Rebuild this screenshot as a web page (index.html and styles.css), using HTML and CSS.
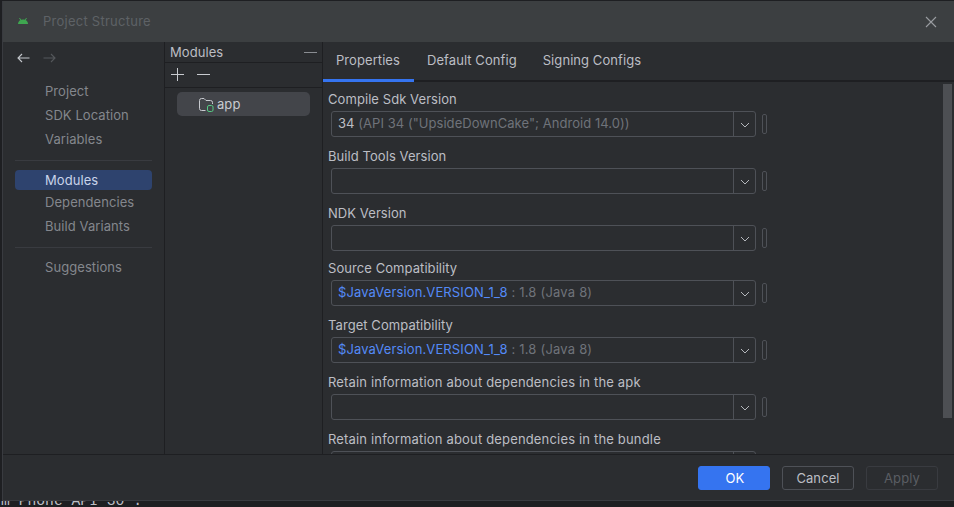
FILE: index.html
```html
<!DOCTYPE html>
<html>
    <head>
        <meta http-equiv="Content-Type" content="text/html; charset=utf-8"/>
        <title>Project Structure</title>
        <link rel="stylesheet" href="styles.css">
    </head>
    <body>
        <div class="dialog">
            <div class="titlebar">
                <svg class="logo" width="10" height="6" viewBox="0 0 10 6"><path d="M0 6C0 3.500 2 1.500 5 1.500S10 3.500 10 6z" fill="#3fa650"/><path d="M1.500 0L3 2.500M8.500 0L7 2.500" stroke="#3fa650" fill="none"/></svg>
                <span class="title">Project Structure</span>
                <svg class="close" width="12" height="12" viewBox="0 0 12 12"><path d="M1 1L11 11M11 1L1 11" stroke="#9a9da1" stroke-width="1.100" fill="none"/></svg>
            </div>
            <div class="main">
                <div class="nav">
                    <div class="arrows">
                        <svg width="13" height="10" viewBox="0 0 13 10"><path d="M12.500 5H1M5 1L1 5L5 9" stroke="#c4c7cc" stroke-width="1.100" fill="none"/></svg>
                        <svg width="13" height="10" viewBox="0 0 13 10"><path d="M.5 5H12M8 1L12 5L8 9" stroke="#55585c" stroke-width="1.100" fill="none"/></svg>
                    </div>
                    <div class="nav-group">
                        <div class="nav-item">Project</div>
                        <div class="nav-item">SDK Location</div>
                        <div class="nav-item">Variables</div>
                    </div>
                    <div class="nav-sep sep-a"></div>
                    <div class="nav-item selected">Modules</div>
                    <div class="nav-item">Dependencies</div>
                    <div class="nav-item">Build Variants</div>
                    <div class="nav-sep sep-b"></div>
                    <div class="nav-item">Suggestions</div>
                </div>
                <div class="modules">
                    <div class="modules-head">
                        <span>Modules</span>
                        <span class="minimize"></span>
                    </div>
                    <div class="modules-tools">
                        <svg width="14" height="14" viewBox="0 0 14 14"><path d="M6.500 1V14M0 7.500H13" stroke="#c8cbd0" stroke-width="1" fill="none"/></svg>
                        <svg width="14" height="14" viewBox="0 0 14 14"><path d="M0 7.500H13" stroke="#c8cbd0" stroke-width="1" fill="none"/></svg>
                    </div>
                    <div class="module-row">
                        <svg class="folder" width="15" height="14" viewBox="0 0 15 14"><path d="M6.500 12.500H2.500a2 2 0 0 1-2-2V2.500a2 2 0 0 1 2-2H5l2 2h4.500a2 2 0 0 1 2 2V6" stroke="#c8cbd0" fill="none"/><rect x="8.500" y="7.500" width="5.500" height="6" rx="1.500" stroke="#56c983" fill="none"/></svg>
                        <span>app</span>
                    </div>
                </div>
                <div class="content">
                    <div class="tabs">
                        <div class="tab active">Properties</div>
                        <div class="tab">Default Config</div>
                        <div class="tab">Signing Configs</div>
                    </div>
                    <div class="props">
                        <div class="form">
                            <div class="row">
                                <label>Compile Sdk Version</label>
                                <div class="line">
                                    <div class="combo"><div class="value"><span class="plain">34</span> (API 34 ("UpsideDownCake"; Android 14.0))</div><div class="drop"><svg width="10" height="6" viewBox="0 0 10 6"><path d="M1 1L5 5L9 1" stroke="#b4b7bc" fill="none"/></svg></div></div>
                                    <div class="pin"></div>
                                </div>
                            </div>
                            <div class="row">
                                <label>Build Tools Version</label>
                                <div class="line">
                                    <div class="combo"><div class="value"></div><div class="drop"><svg width="10" height="6" viewBox="0 0 10 6"><path d="M1 1L5 5L9 1" stroke="#b4b7bc" fill="none"/></svg></div></div>
                                    <div class="pin"></div>
                                </div>
                            </div>
                            <div class="row short">
                                <label>NDK Version</label>
                                <div class="line">
                                    <div class="combo"><div class="value"></div><div class="drop"><svg width="10" height="6" viewBox="0 0 10 6"><path d="M1 1L5 5L9 1" stroke="#b4b7bc" fill="none"/></svg></div></div>
                                    <div class="pin"></div>
                                </div>
                            </div>
                            <div class="row">
                                <label>Source Compatibility</label>
                                <div class="line">
                                    <div class="combo"><div class="value java"><span class="ref">$JavaVersion.VERSION_1_8</span> : 1.8 (Java 8)</div><div class="drop"><svg width="10" height="6" viewBox="0 0 10 6"><path d="M1 1L5 5L9 1" stroke="#b4b7bc" fill="none"/></svg></div></div>
                                    <div class="pin"></div>
                                </div>
                            </div>
                            <div class="row">
                                <label>Target Compatibility</label>
                                <div class="line">
                                    <div class="combo"><div class="value java"><span class="ref">$JavaVersion.VERSION_1_8</span> : 1.8 (Java 8)</div><div class="drop"><svg width="10" height="6" viewBox="0 0 10 6"><path d="M1 1L5 5L9 1" stroke="#b4b7bc" fill="none"/></svg></div></div>
                                    <div class="pin"></div>
                                </div>
                            </div>
                            <div class="row">
                                <label class="long">Retain information about dependencies in the apk</label>
                                <div class="line">
                                    <div class="combo"><div class="value"></div><div class="drop"><svg width="10" height="6" viewBox="0 0 10 6"><path d="M1 1L5 5L9 1" stroke="#b4b7bc" fill="none"/></svg></div></div>
                                    <div class="pin"></div>
                                </div>
                            </div>
                            <div class="row">
                                <label class="long">Retain information about dependencies in the bundle</label>
                                <div class="line">
                                    <div class="combo"><div class="value"></div><div class="drop"><svg width="10" height="6" viewBox="0 0 10 6"><path d="M1 1L5 5L9 1" stroke="#b4b7bc" fill="none"/></svg></div></div>
                                    <div class="pin"></div>
                                </div>
                            </div>
                        </div>
                        <div class="scrollbar"><div class="thumb"></div></div>
                    </div>
                </div>
            </div>
            <div class="footer">
                <button class="btn primary">OK</button>
                <button class="btn">Cancel</button>
                <button class="btn disabled">Apply</button>
            </div>
        </div>
        <div class="behind"><div class="behind-text">m Phone API 30 :</div></div>
    </body>
</html>
```

FILE: styles.css
```css
html, body {
    margin: 0;
    padding: 0;
    height: 507px;
    overflow: hidden;
}
body {
    background-color: #1e1f22;
    font-family: Inter, "Liberation Sans", sans-serif;
    font-size: 13px;
    letter-spacing: .07px;
    color: #bcbec4;
}
.dialog {
    height: 499px;
    margin: 1px 0 0 2px;
    display: flex;
    flex-direction: column;
    background-color: #2b2d30;
    border-left: 1px solid #393b40;
    border-bottom: 1px solid #393b40;
}
.titlebar {
    height: 41px;
    flex: none;
    display: flex;
    align-items: center;
    padding: 0 17px 0 15px;
    background-color: #3c3f41;
}
.logo {
    margin-right: 15px;
    margin-top: -2px;
}
.title {
    color: #5e6266;
    flex: 1;
    letter-spacing: .25px;
    margin-top: -1px;
}
.main {
    height: 412px;
    flex: none;
    display: flex;
    border-bottom: 1px solid #1e1f22;
    overflow: hidden;
}

/* left nav */
.nav {
    width: 161px;
    flex: none;
    border-right: 1px solid #1e1f22;
    color: #84878d;
}
.arrows {
    display: flex;
    gap: 13px;
    padding: 11px 0 0 14px;
    height: 25px;
}
.nav-group {
    padding-top: 1px;
}
.nav-item {
    height: 24px;
    line-height: 24px;
    padding-left: 42px;
}
.nav-sep {
    height: 1px;
    background-color: #393b40;
    margin: 0 12px;
}
.sep-a {
    margin-top: 9px;
    margin-bottom: 9px;
}
.sep-b {
    margin-top: 9px;
    margin-bottom: 7px;
}
.nav-item.selected {
    height: 20px;
    line-height: 20px;
    margin: 0 12px;
    padding-left: 30px;
    border-radius: 4px;
    background-color: #2e436e;
    color: #c9d4ea;
}

/* modules column */
.modules {
    width: 157px;
    flex: none;
    border-right: 1px solid #1e1f22;
}
.modules-head {
    height: 20px;
    display: flex;
    align-items: center;
    justify-content: space-between;
    padding: 0 5px 0 5px;
    border-bottom: 1px solid #1e1f22;
}
.minimize {
    width: 13px;
    height: 1px;
    background-color: #8a8d92;
}
.modules-tools {
    height: 22px;
    padding-bottom: 2px;
    display: flex;
    align-items: center;
    gap: 12px;
    padding-left: 6px;
    border-bottom: 1px solid #1e1f22;
}
.module-row {
    height: 24px;
    margin: 4px 12px 0 12px;
    padding-left: 22px;
    display: flex;
    align-items: center;
    gap: 3px;
    border-radius: 5px;
    background-color: #43454a;
    color: #c8cbd0;
}
.folder {
    margin-top: 1px;
}

/* right side */
.content {
    flex: 1;
    display: flex;
    flex-direction: column;
    min-width: 0;
}
.tabs {
    height: 38px;
    flex: none;
    display: flex;
    border-bottom: 2px solid #1e1f22;
}
.tab {
    padding: 0 13px;
    line-height: 36px;
    height: 40px;
    box-sizing: border-box;
}
.tab.active {
    border-bottom: 3px solid #3574f0;
    width: 91px;
}
.props {
    flex: 1;
    display: flex;
    min-height: 0;
}
.form {
    flex: 1;
    padding: 9px 0 0 5px;
    min-width: 0;
}
.row {
    height: 57px;
}
.row.short {
    height: 55px;
}
label {
    display: block;
    height: 20px;
    line-height: 16px;
}
label.long {
    letter-spacing: .17px;
}
.line {
    display: flex;
    align-items: center;
    gap: 6px;
    margin-left: 3px;
}
.combo {
    width: 423px;
    height: 24px;
    display: flex;
    border: 1px solid #4e5157;
    border-radius: 3px;
}
.value {
    flex: 1;
    line-height: 22px;
    padding-left: 6px;
    color: #6f737a;
    letter-spacing: .05px;
    white-space: nowrap;
}
.value.java {
    letter-spacing: .2px;
}
.plain {
    color: #bcbec4;
}
.ref {
    color: #548af7;
    letter-spacing: .12px;
}
.drop {
    width: 22px;
    border-left: 1px solid #4e5157;
    display: flex;
    align-items: center;
    justify-content: center;
    padding-top: 2px;
    box-sizing: border-box;
}
.pin {
    width: 3px;
    height: 18px;
    border: 1px solid #4e5157;
    border-radius: 2px;
}
.scrollbar {
    width: 11px;
    flex: none;
    padding-top: 2px;
}
.thumb {
    width: 9px;
    height: 334px;
    background-color: #4d4f53;
}

/* buttons */
.footer {
    flex: 1;
    display: flex;
    justify-content: flex-end;
    align-items: center;
    gap: 12px;
    padding: 1px 16px 0 0;
}
.btn {
    width: 72px;
    height: 24px;
    box-sizing: border-box;
    font-family: inherit;
    font-size: 13px;
    letter-spacing: .1px;
    padding: 0;
    border: 1px solid #4e5157;
    border-radius: 3px;
    background-color: transparent;
    color: #bcbec4;
}
.btn.primary {
    background-color: #3574f0;
    border-color: #3574f0;
    color: #fff;
    padding-left: 2px;
}
.btn.disabled {
    border-color: #393b40;
    color: #5a5d63;
}

/* the window behind the dialog */
.behind {
    height: 6px;
    overflow: hidden;
}
.behind-text {
    margin-top: -8px;
    padding-left: 1px;
    font-family: "Liberation Mono", monospace;
    font-size: 14.700px;
    line-height: 17px;
    letter-spacing: 0;
    color: #bcbec4;
}
```
